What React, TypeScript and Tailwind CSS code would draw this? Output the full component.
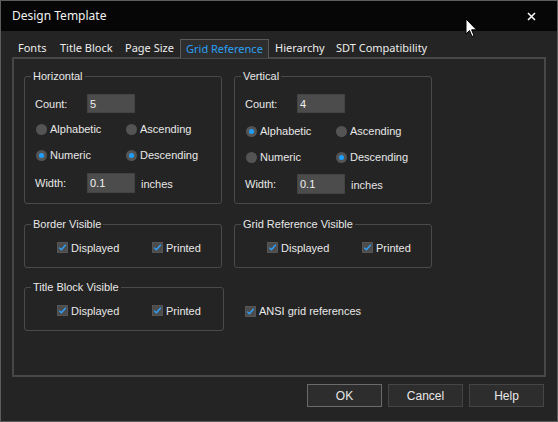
import React from "react";

const LABEL = "font-['Liberation_Sans',Arial,sans-serif] text-[11px] leading-[14px] text-[#e8e8e8]";

function Radio({ label, on }: { label: string; on?: boolean }) {
  return (
    <div className="flex items-center">
      <span className="flex h-[11px] w-[11px] items-center justify-center rounded-full bg-[#545454]">
        {on && <span className="h-[5px] w-[5px] rounded-full bg-[#1e9fff]" />}
      </span>
      <span className={`ml-[3px] ${LABEL}`}>{label}</span>
    </div>
  );
}

function Check({ label }: { label: string }) {
  return (
    <div className="flex items-center">
      <span className="flex h-[11px] w-[11px] items-center justify-center bg-[#4c4c4c] border border-[#555]">
        <svg width="9" height="9" viewBox="0 0 9 9">
          <path d="M1.2 4.6 L3.4 6.8 L7.8 1.8" fill="none" stroke="#2fa2ff" strokeWidth="1.3" />
        </svg>
      </span>
      <span className={`ml-[3px] ${LABEL}`}>{label}</span>
    </div>
  );
}

function Field({ value }: { value: string }) {
  return (
    <div className={`flex h-full w-[48px] items-center bg-[#4c4c4c] border border-[#434343] pl-[2px] ${LABEL} text-[#f2f2f2]`}>
      {value}
    </div>
  );
}

function Group({ title, className, children }: { title: string; className: string; children: React.ReactNode }) {
  return (
    <div className={`relative rounded-[3px] border border-[#4a4a4a] ${className}`}>
      <span className={`absolute -top-[8px] left-[6px] bg-[#242424] px-[2px] ${LABEL}`}>{title}</span>
      {children}
    </div>
  );
}

function Axis({ title, count, a, shift }: { title: string; count: string; a: boolean; shift: boolean }) {
  return (
    <Group title={title} className="h-[128px] w-[198px]">
      <div className="flex h-[19px] items-center mt-[17px] pl-[10px]">
        <span className={`w-[52px] ${LABEL}`}>Count:</span>
        <Field value={count} />
      </div>
      <div className={`flex h-[20px] items-center pl-[11px] ${shift ? "mt-[8px]" : "mt-[6px]"}`}>
        <div className="w-[90px]"><Radio label="Alphabetic" on={a} /></div>
        <Radio label="Ascending" />
      </div>
      <div className="flex h-[20px] items-center mt-[6px] pl-[11px]">
        <div className="w-[90px]"><Radio label="Numeric" on={!a} /></div>
        <Radio label="Descending" on />
      </div>
      <div className={`flex h-[20px] items-center pl-[10px] ${shift ? "mt-[7px]" : "mt-[8px]"}`}>
        <span className={`w-[52px] ${LABEL}`}>Width:</span>
        <Field value="0.1" />
        <span className={`ml-[6px] mt-[2px] ${LABEL}`}>inches</span>
      </div>
    </Group>
  );
}

function Visible({ title, className = "w-[198px]" }: { title: string; className?: string }) {
  return (
    <Group title={title} className={`h-[44px] ${className}`}>
      <div className="flex h-full items-center pl-[32px] pt-[3px]">
        <div className="w-[95px]"><Check label="Displayed" /></div>
        <Check label="Printed" />
      </div>
    </Group>
  );
}

const tabs = [
  { name: "Fonts", w: "w-[42px]" },
  { name: "Title Block", w: "w-[65px]" },
  { name: "Page Size", w: "w-[61px]" },
  { name: "Grid Reference", w: "w-[89px]" },
  { name: "Hierarchy", w: "w-[61px]" },
  { name: "SDT Compatibility", w: "w-[104px]" },
];

export default function App() {
  const tabFont = "font-['Noto_Sans',sans-serif] text-[11px]";
  return (
    <div className="relative flex h-[422px] w-[558px] flex-col border border-[#5c5c5c] bg-[#242424]">
      {/* title bar */}
      <div className="flex h-[30px] items-center justify-between bg-[#060606] pl-[11px] pr-[21px]">
        <span className={`${tabFont} text-[12px] text-[#f2f2f2]`}>Design Template</span>
        <svg width="9" height="9" viewBox="0 0 9 9">
          <path d="M1 1 L8 8 M8 1 L1 8" stroke="#f5f5f5" strokeWidth="1.6" />
        </svg>
      </div>

      {/* tabs */}
      <div className="mt-[8px] flex h-[18px] items-end pl-[11px]">
        {tabs.map((t) =>
          t.name === "Grid Reference" ? (
            <div
              key={t.name}
              className={`${t.w} relative z-10 -mb-[1px] flex h-[19px] items-center border border-b-0 border-[#5a5a5a] bg-[#2e2e2e] pl-[5px] ${tabFont} text-[#2aa0f5]`}
            >
              {t.name}
            </div>
          ) : (
            <div key={t.name} className={`${t.w} flex h-[18px] items-center pl-[6px] ${tabFont} text-[#ececec]`}>
              {t.name}
            </div>
          )
        )}
      </div>

      {/* panel */}
      <div className="ml-[11px] h-[320px] w-[534px] border-2 border-[#474747] bg-[#242424] pl-[10px] pt-[17px]">
        <div className="flex gap-[12px]">
          <Axis title="Horizontal" count="5" a={false} shift={false} />
          <Axis title="Vertical" count="4" a={true} shift={true} />
        </div>
        <div className="mt-[20px] flex gap-[12px]">
          <Visible title="Border Visible" />
          <Visible title="Grid Reference Visible" />
        </div>
        <div className="mt-[19px] flex items-center">
          <Visible title="Title Block Visible" className="w-[200px]" />
          <div className="ml-[21px] pt-[4px]"><Check label="ANSI grid references" /></div>
        </div>
      </div>

      {/* buttons */}
      <div className="mt-[7px] flex justify-end gap-[6px] pr-[13px]">
        {["OK", "Cancel", "Help"].map((b) => (
          <button
            key={b}
            className={`flex h-[23px] w-[75px] items-center justify-center bg-[#2d2d2d] border ${
              b === "OK" ? "border-[#6a6a6a]" : "border-[#454545]"
            } ${LABEL} text-[12px]`}
          >
            {b}
          </button>
        ))}
      </div>

      {/* mouse pointer */}
      <svg className="absolute left-[464px] top-[17px]" width="13" height="21" viewBox="0 0 13 21">
        <path d="M1 1 L1 16 L4.5 12.5 L7 18.5 L9 17.5 L6.6 11.8 L11.5 11.8 Z" fill="#fff" stroke="#000" strokeWidth="1" strokeLinejoin="round" />
      </svg>
    </div>
  );
}
